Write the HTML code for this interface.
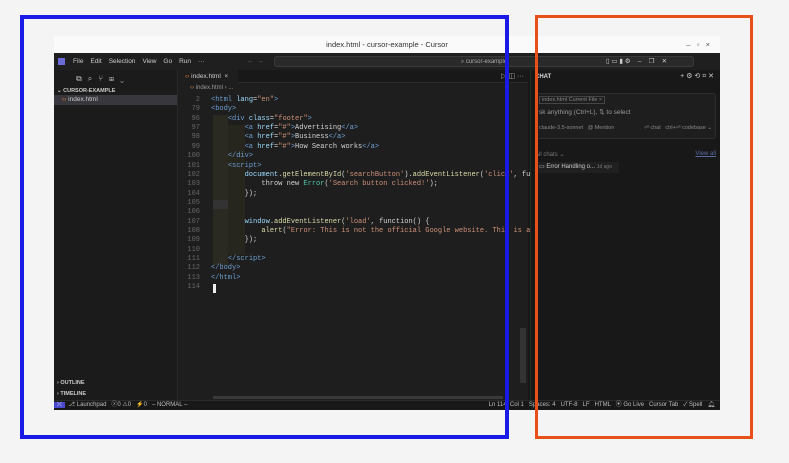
<!DOCTYPE html>
<html><head><meta charset="utf-8"><style>
*{margin:0;padding:0;box-sizing:border-box}
body{width:789px;height:463px;background:#f4f4f4;position:relative;overflow:hidden;font-family:"Liberation Sans",sans-serif;font-size:7px;color:#ccc}
.abs{position:absolute}
.win{left:54px;top:36px;width:666px;height:374px;background:#181818}
.title{left:0;top:0;width:666px;height:17px;background:#fafafa;color:#333;font-size:7.5px;text-align:center;line-height:17px}
.menu{left:0;top:17px;width:666px;height:17px;background:#1f1f1f;line-height:17px}
.menu span{margin-right:7px;color:#ccc;font-size:6.5px}
.side{left:0;top:34px;width:124px;height:330px;background:#1b1b1b;border-right:1px solid #2a2a2a}
.editor{left:124px;top:34px;width:350px;height:330px;background:#1e1e1e}
.chat{left:476px;top:34px;width:190px;height:330px;background:#181818;border-left:1px solid #2a2a2a}
.status{left:0;top:364px;width:666px;height:10px;background:#181818;border-top:1px solid #2a2a2a;font-size:6px;line-height:9px;color:#bbb}
.code{font-family:"Liberation Mono",monospace;font-size:7px;white-space:pre}
.code .r{height:9.37px;line-height:9.37px;display:block}
.ln{color:#666;text-align:right;width:22px}
.t{color:#6e9fd1}.s{color:#ce9178}.a{color:#9cdcfe}.f{color:#dcdcaa}.w{color:#d4d4d4}.c{color:#4ec9b0}
</style></head><body>
<div class="abs win">
 <div class="abs title">index.html - cursor-example - Cursor<span style="position:absolute;right:10px;color:#555">–&nbsp;&nbsp;&nbsp;▫&nbsp;&nbsp;&nbsp;×</span></div>
 <div class="abs menu"><span style="display:inline-block;width:7px;height:7px;background:#6a6ad8;margin:0 8px 0 4px;vertical-align:middle"></span><span>File</span><span>Edit</span><span>Selection</span><span>View</span><span>Go</span><span>Run</span><span>···</span>
  <span style="position:absolute;left:193px;color:#777">←&nbsp;&nbsp;→</span>
  <div class="abs" style="left:220px;top:3px;width:420px;height:11px;background:#2a2a2a;border:1px solid #3a3a3a;border-radius:3px;text-align:center;line-height:10px;font-size:6px;color:#aaa">⌕ cursor-example</div>
  <span style="position:absolute;left:552px;color:#ccc">▯ ▭ ▮ ⚙ &nbsp;&nbsp; – &nbsp;&nbsp; ❐ &nbsp;&nbsp; ✕</span>
 </div>
 <div class="abs side">
  <div style="padding:4px 0 0 22px;color:#bbb;font-size:8px;letter-spacing:6px">⧉⌕⑂⊞⌄</div>
  <div style="margin-top:4px;padding-left:3px;font-size:5.5px;font-weight:bold;color:#ccc">⌄ CURSOR-EXAMPLE</div>
  <div style="background:#37373d;height:10px;line-height:10px;padding-left:8px;font-size:6.5px;margin-top:1px"><span style="color:#e37933">‹›</span> index.html</div>
  <div class="abs" style="top:310px;left:3px;font-size:5.5px;font-weight:bold">› OUTLINE</div>
  <div class="abs" style="top:321px;left:3px;font-size:5.5px;font-weight:bold">› TIMELINE</div>
 </div>
 <div class="abs editor">
  <div style="height:13px;background:#181818;border-bottom:1px solid #2a2a2a"><div style="width:60px;height:13px;background:#1e1e1e;line-height:13px;padding-left:7px;font-size:6.5px"><span style="color:#e37933">‹›</span> index.html &nbsp;×</div><span style="position:absolute;right:4px;top:2px;color:#aaa">▷ ◫ ···</span></div>
  <div style="font-size:6px;color:#999;padding:2px 0 0 12px"><span style="color:#e37933">‹›</span> index.html › ...</div>
  <div class="abs" style="left:35px;top:45px;width:15px;height:150px;background:#2a2a22"></div>
  <div class="abs" style="left:50px;top:55px;width:17px;height:130px;background:#26261f"></div>
  <div class="abs" style="left:35px;top:130px;width:15px;height:9px;background:#333"></div>
  <div class="abs" style="left:35px;top:214px;width:3px;height:9px;background:#eee"></div>
  <div class="abs" style="left:35px;top:326px;width:290px;height:3px;background:#3a3a3a"></div>
  <div class="abs" style="left:342px;top:258px;width:6px;height:55px;background:#333"></div>
  <div class="abs code" style="left:0;top:26px;display:flex"><div class="ln"><span class="r">2</span><span class="r">79</span><span class="r">96</span><span class="r">97</span><span class="r">98</span><span class="r">99</span><span class="r">100</span><span class="r">101</span><span class="r">102</span><span class="r">103</span><span class="r">104</span><span class="r">105</span><span class="r">106</span><span class="r">107</span><span class="r">108</span><span class="r">109</span><span class="r">110</span><span class="r">111</span><span class="r">112</span><span class="r">113</span><span class="r">114</span></div><div style="padding-left:11px" class="w"><span class="r"><span class="t">&lt;html</span> <span class="a">lang</span>=<span class="s">"en"</span><span class="t">&gt;</span></span><span class="r"><span class="t">&lt;body&gt;</span></span><span class="r">    <span class="t">&lt;div</span> <span class="a">class</span>=<span class="s">"footer"</span><span class="t">&gt;</span></span><span class="r">        <span class="t">&lt;a</span> <span class="a">href</span>=<span class="s">"#"</span><span class="t">&gt;</span>Advertising<span class="t">&lt;/a&gt;</span></span><span class="r">        <span class="t">&lt;a</span> <span class="a">href</span>=<span class="s">"#"</span><span class="t">&gt;</span>Business<span class="t">&lt;/a&gt;</span></span><span class="r">        <span class="t">&lt;a</span> <span class="a">href</span>=<span class="s">"#"</span><span class="t">&gt;</span>How Search works<span class="t">&lt;/a&gt;</span></span><span class="r">    <span class="t">&lt;/div&gt;</span></span><span class="r">    <span class="t">&lt;script&gt;</span></span><span class="r">        <span class="a">document</span>.<span class="f">getElementById</span>(<span class="s">'searchButton'</span>).<span class="f">addEventListener</span>(<span class="s">'click'</span>, fu</span><span class="r">            throw new <span class="c">Error</span>(<span class="s">'Search button clicked!'</span>);</span><span class="r">        });</span><span class="r"> </span><span class="r"> </span><span class="r">        <span class="a">window</span>.<span class="f">addEventListener</span>(<span class="s">'load'</span>, function() {</span><span class="r">            <span class="f">alert</span>(<span class="s">"Error: This is not the official Google website. This is a</span></span><span class="r">        });</span><span class="r"> </span><span class="r">    <span class="t">&lt;/script&gt;</span></span><span class="r"><span class="t">&lt;/body&gt;</span></span><span class="r"><span class="t">&lt;/html&gt;</span></span></div></div>
 </div>
 <div class="abs chat">
  <div style="height:14px;line-height:14px;padding-left:4px;font-size:6px;font-weight:bold;color:#ddd">CHAT<span style="position:absolute;right:6px;font-weight:normal;color:#ccc;font-size:7px">+ ⚙ ⟲ ⌗ ✕</span></div>
  <div style="margin:9px 4px 0;height:46px;background:#1e1e1e;border:1px solid #2c2c2c;border-radius:3px;padding:3px;font-size:5.5px;color:#888">
   <div><span style="border:1px solid #444;padding:0 2px">index.html Current File ×</span></div>
   <div style="margin-top:5px;font-size:6.5px;color:#999">sk anything (Ctrl+L), ⇅ to select</div>
   <div style="margin-top:9px">claude-3.5-sonnet &nbsp; @ Mention<span style="float:right">⏎ chat &nbsp; ctrl+⏎ codebase ⌄</span></div>
  </div>
  <div style="padding:12px 4px 0;font-size:6px;color:#777">All chats ⌄<span style="float:right;color:#5a6aa0;text-decoration:underline">View all</span></div>
  <div style="margin:4px 4px;width:84px;height:11px;background:#202020;font-size:6px;line-height:11px;padding-left:4px;color:#ccc">▭ Error Handling o... <span style="color:#777;font-size:5px">1d ago</span></div>
 </div>
 <div class="abs status"><span style="background:#4a4ad0;padding:0 3px;color:#fff">⤫</span> &nbsp;⎇ Launchpad &nbsp; ⓧ0 ⚠0 &nbsp; ⚡0 &nbsp; – NORMAL –<span style="position:absolute;right:5px">Ln 114, Col 1 &nbsp; Spaces: 4 &nbsp; UTF-8 &nbsp; LF &nbsp; HTML &nbsp; ⦿ Go Live &nbsp; Cursor Tab &nbsp; ✓ Spell &nbsp; 🔔︎</span></div>
</div>
<div class="abs" style="left:20px;top:15px;width:489px;height:424px;border:4px solid #1a1ae6"></div>
<div class="abs" style="left:535px;top:15px;width:218px;height:424px;border:3px solid #e8501a"></div>
</body></html>
